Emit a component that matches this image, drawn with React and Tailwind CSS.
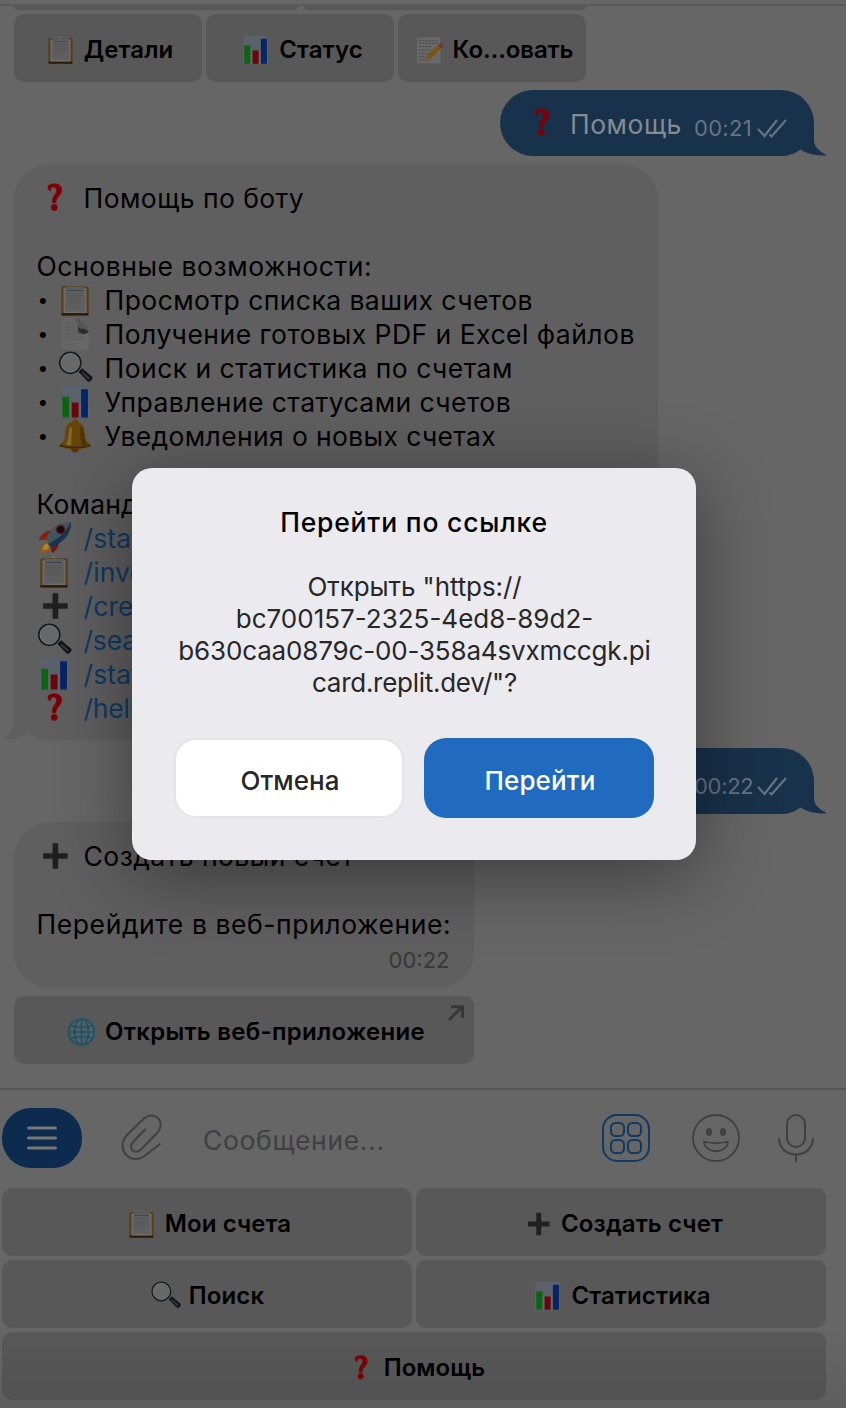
import React from "react";

const emojiArt = {
  clipboard: (
    <>
      <path d="M13 4.500 16 1.500 19 4.500" fill="none" stroke="#5f7280" strokeWidth="1.2" />
      <rect x="1.5" y="3.5" width="29" height="31" rx="2" fill="#5a3d14" />
      <rect x="1.5" y="31.8" width="29" height="2.7" rx="1.2" fill="#2f1c05" />
      <rect x="3.8" y="5.5" width="24.4" height="26.3" fill="#6c6c6c" />
      <rect x="5.5" y="9" width="21" height="21" fill="#5f5f5f" />
      <path d="M8 11h16M8 13.5h16M8 16h16M8 18.5h16M8 21h12" stroke="#565656" strokeWidth="1" />
      <path d="M5.5 4h21l-1.5 4h-18z" fill="#585e63" />
      <path d="M7 8h18" stroke="#393d40" strokeWidth="1" />
    </>
  ),
  chart: (
    <>
      <rect x="1.5" y="1" width="29" height="34" fill="#59626a" />
      <rect x="1.5" y="18" width="29" height="17" fill="#60666a" />
      <rect x="2.5" y="12.5" width="7.3" height="22" fill="#0c6413" />
      <rect x="12.5" y="18.5" width="7.3" height="16" fill="#6b060c" />
      <rect x="22.5" y="4.5" width="7.2" height="30" fill="#062566" />
    </>
  ),
  question: (
    <g transform="translate(.8 0)" fill="#7c0006" stroke="#7c0006" strokeWidth=".6">
      <path d="M8.800 5.300C14 1.300 23.300 2 23.300 9.800c0 6.200-5.900 6.400-6 13.200h-3.700c-.6-8.200 4.300-8.200 4.300-13 0-3-2.200-3.900-4.300-3.500-1.600.3-2.300 1.600-2 3.500-2.200.3-2.800-.8-2.800-4.700z" />
      <circle cx="15.5" cy="28" r="3.3" />
    </g>
  ),
  plus: <path d="M14.500 4.500h6V15h10v6h-10v10.500h-6V21h-10v-6h10z" fill="#202020" />,
  search: (
    <>
      <path d="m20.5 22 3-3 10 8.5c1.5 1.5-1.8 5.5-3.8 4z" fill="#15191b" stroke="#101314" strokeWidth="1.2" />
      <path d="m23.5 22.8 7.5 6.7" stroke="#3b4042" strokeWidth="1.5" />
      <circle cx="11" cy="12.5" r="11" fill="#686868" stroke="#171b1e" strokeWidth="2" />
      <circle cx="11" cy="12.5" r="9.8" fill="none" stroke="#777b7e" strokeWidth=".9" />
    </>
  ),
  page: (
    <>
      <path d="M1.5 1H18c2 3 0 9 3 11 3 1 7 0 9.5 5v18h-29z" fill="#666" />
      <path d="M5 6h10M5 8.5h10M5 11h11M5 13.5h12M5 16h16M5 18.5h20M5 21h20M5 23.5h20M5 29h9" stroke="#5c5c5c" />
      <path d="M15 1c6 .5 14 6 15.500 14-3-2-7 1-11-1 1-4 0-11-4.500-13" fill="#555" />
      <path d="M15 1c4 3 3 9 6 11 3 1 7 0 9.500 4-3 3-8 2-11 0 0-5-1-11-4.500-15" fill="#2d2d2d" />
    </>
  ),
  bell: (
    <>
      <circle cx="16" cy="31.5" r="4" fill="#543704" />
      <path d="M13 3c0-4 6-4 6 0 6 1.5 7 7 7.5 14 .3 6 2.5 8 6 10v2q-16.500 6-33 0v-2c3.5-2 5.700-4 6-10C6 10 7 4.500 13 3" fill="#664509" />
      <path d="M10 9c-1 8-.5 13-4 18l6 1c0-5 .5-13 1-19z" fill="#87662a" />
      <path d="M21 7c1 8 0 14 3 21l5-1c-4-5-3-14-5-18z" fill="#4f3405" />
      <path d="M0 28q16 5 32 0" fill="none" stroke="#3e2602" strokeWidth="1.7" />
    </>
  ),
  rocket: (
    <>
      <path d="M13 10C8 10 3 13-.5 20l8-.5z" fill="#84200f" />
      <path d="m21 20-9 7 2 7c5-3 8-8 7-14" fill="#7a1510" />
      <path d="M2 34c-1-7 2-11 7-12l4 5c-1 5-5 7-11 7" fill="#94581b" />
      <path d="M4 31c0-4 2-7 5-7l2 3c-1 3-3 4-7 4" fill="#a18a32" />
      <path d="M7 20C11 9 20 1 34 1c1 11-8 22-21 27z" fill="#46535e" />
      <path d="M34 1c1 11-8 22-21 27l-3-4C20 20 29 11 34 1" fill="#18344e" />
      <circle cx="23" cy="9" r="4.2" fill="#120d10" stroke="#681318" strokeWidth="1.5" />
    </>
  ),
  memo: (
    <>
      <path d="M1 3h28v31H1z" fill="#696969" />
      <path d="M3 7h23M3 10h23M3 14h15M3 18h14M3 22h12M3 26h8M3 30h6" stroke="#4d4d4d" strokeDasharray="3 1" strokeWidth="1.2" />
      <path d="m9 33 3-8L26 12l4 4-14 14z" fill="#76571a" />
      <path d="m9 33 3-8 4 5z" fill="#635f51" />
      <path d="m26 12 3-2c3-.5 5 3 2.500 5L30 16z" fill="#6b373a" />
    </>
  ),
  globe: (
    <g fill="none" stroke="#1d5166" strokeWidth="1.8">
      <circle cx="16" cy="18" r="15.5" fill="#515f65" />
      <ellipse cx="16" cy="18" rx="8.5" ry="15.5" />
      <path d="M16 2.500v31M.5 18h31M3 10.500q13 4 26 0M3 25.500q13-4 26 0" />
    </g>
  ),
};

function Emoji({ name, small }) {
  return (
    <svg viewBox="0 0 32 36" className={small ? "h-[30px] w-[27px] shrink-0 overflow-visible" : "h-[34px] w-[32px] shrink-0 overflow-visible"}>
      {emojiArt[name]}
    </svg>
  );
}

function Key({ icon, label, className = "", pad = "pl-[4px]", text = "tracking-[0.1px]", children }) {
  return (
    <button className={`relative flex h-[68px] items-center justify-center gap-[10px] rounded-[10px] bg-[#585858] pt-[3px] text-[24px] font-semibold text-black ${pad} ${className}`}>
      <Emoji name={icon} small />
      <span className={`whitespace-nowrap ${text}`}>{label}</span>
      {children}
    </button>
  );
}

function Checks() {
  return (
    <svg viewBox="0 0 30 20" className="h-[20px] w-[30px]" fill="none" stroke="currentColor" strokeWidth="2.2">
      <path d="m1 10 6.500 7L20 1M12.500 15.500l2 2L29 1" />
    </svg>
  );
}

function Outgoing({ icon, label, time, timeText }) {
  return (
    <div className="relative mr-8 flex h-[66px] w-[314px] items-center self-end rounded-[33px] bg-[#18324b] pl-[25px]">
      <span className="flex w-[32px]">{icon && <Emoji name={icon} />}</span>
      <span className="ml-[13px] w-[112px] whitespace-nowrap pt-[4px] text-[26.5px] tracking-[0.5px] text-[#848b91]">{label}</span>
      <span className={`ml-[12px] mt-[11px] w-[60px] text-[22px] text-[#667582] ${timeText}`}>{time}</span>
      <span className="ml-[3px] mt-[11px] text-[#667582]"><Checks /></span>
      <svg viewBox="0 0 46 34" className="absolute -right-[12px] bottom-0 h-[34px] w-[46px]">
        <path d="M0 34C8 34 14 31 20 27c7 5 15 6.500 26 6.500v-1C39 29 34 25 34 18V0H10z" fill="#18324b" />
      </svg>
    </div>
  );
}

function Row({ icon, bullet, children, link, text = "tracking-[0.44px]" }) {
  return (
    <div className={`flex h-[34px] items-center whitespace-nowrap ${link ? "text-[#103963]" : ""}`}>
      {bullet && <span className="w-[21px] pl-[1px] pt-[2px] text-[19px]">•</span>}
      {icon && <span className="ml-[1.5px] mr-[13.5px] flex"><Emoji name={icon} /></span>}
      <span className={`leading-[34px] ${text}`}>{children}</span>
    </div>
  );
}

function Chat() {
  return (
    <main className="relative flex h-[1082px] flex-col overflow-hidden">
      <div className="flex h-1 gap-[6px] pl-[14px]">
        <div className="h-1 w-[284px] rounded-b-[10px] bg-[#585858]" />
        <div className="h-1 w-[282px] rounded-b-[10px] bg-[#585858]" />
      </div>
      <div className="mt-1 flex gap-1 pl-[14px]">
        <Key icon="clipboard" label="Детали" className="w-[188px]" />
        <Key icon="chart" label="Статус" className="w-[188px]" pad="pl-[5px]" text="tracking-[0.1px]" />
        <Key icon="memo" label="Ко…овать" className="w-[188px]" pad="pl-[5px]" text="tracking-[-0.1px]" />
      </div>
      <div className="mt-2 flex flex-col"><Outgoing icon="question" label="Помощь" time="00:21" timeText="tracking-[0.3px]" /></div>
      <section className="relative ml-[14px] mt-2 h-[576px] w-[644px] rounded-[36px] bg-[#5f5f5f] pl-[22.5px] pt-[17px] text-[26.5px] text-black">
        <Row icon="question">Помощь по боту</Row>
        <Row />
        <Row text="tracking-[0.56px]">Основные возможности:</Row>
        <Row bullet icon="clipboard">Просмотр списка ваших счетов</Row>
        <Row bullet icon="page" text="tracking-[0.48px]">Получение готовых PDF и Excel файлов</Row>
        <Row bullet icon="search" text="tracking-[0.47px]">Поиск и статистика по счетам</Row>
        <Row bullet icon="chart">Управление статусами счетов</Row>
        <Row bullet icon="bell" text="tracking-[0.36px]">Уведомления о новых счетах</Row>
        <Row />
        <Row text="tracking-[0.2px]">Команды:</Row>
        <Row link icon="rocket" text="tracking-[0.1px]">/start</Row>
        <Row link icon="clipboard" text="tracking-[0.1px]">/invoices</Row>
        <Row link icon="plus" text="tracking-[0.1px]">/create</Row>
        <Row link icon="search" text="tracking-[-0.2px]">/search</Row>
        <Row link icon="chart" text="tracking-[0.1px]">/stats</Row>
        <Row link icon="question" text="tracking-[-0.2px]">/help</Row>
        <svg viewBox="0 0 46 34" className="absolute -left-[12px] bottom-0 h-[34px] w-[46px] -scale-x-100">
          <path d="M0 34C8 34 14 31 20 27c7 5 15 6.500 26 6.500v-1C39 29 34 25 34 18V0H10z" fill="#5f5f5f" />
        </svg>
      </section>
      <div className="mt-2 flex flex-col"><Outgoing time="00:22" timeText="tracking-[-0.3px]" /></div>
      <section className="ml-[14px] mt-2 h-[166px] w-[460px] rounded-[36px] bg-[#5f5f5f] pl-[22.5px] pt-[17px] text-[26.5px] text-black">
        <Row icon="plus">Создать новый счет</Row>
        <Row />
        <Row text="tracking-[0.58px]">Перейдите в веб-приложение:</Row>
        <div className="mr-[24.5px] mt-[2px] text-right text-[22px] leading-[34px] text-[#373737]">00:22</div>
      </section>
      <Key icon="globe" label="Открыть веб-приложение" className="ml-[14px] mt-2 w-[460px]" pad="pl-[5px]" text="tracking-[0.27px]">
        <svg viewBox="0 0 16 16" className="absolute right-[10px] top-[9px] size-4" fill="none" stroke="#373737" strokeWidth="3">
          <path d="M1 15 13.500 2.500M3 1.800h11.500V13" />
        </svg>
      </Key>
    </main>
  );
}

function Composer() {
  return (
    <div className="flex h-[98px] shrink-0 items-center border-t-2 border-[#575757] pl-[2px] text-[#404040]">
      <button className="flex h-[60px] w-[80px] items-center justify-center rounded-[29px] bg-[#0d2b4e]">
        <svg viewBox="0 0 30 24" className="h-6 w-[30px]" stroke="#777" strokeWidth="3" strokeLinecap="round"><path d="M1.500 2h27M1.500 12h27M1.500 22h27" /></svg>
      </button>
      <svg viewBox="0 0 42 48" className="ml-[39px] h-12 w-[42px]" fill="none" stroke="currentColor" strokeWidth="2" strokeLinecap="round">
        <path d="M24 15.500 12.500 27.500c-6 7 .8 13.500 7 8.500L36.500 18.500C45.500 8 34-4 23.500 4L5.500 21.500C-6 35.500 10 53 25 41L39 30" />
      </svg>
      <span className="ml-[40px] w-[399px] pt-[6px] text-[26.5px] tracking-[0.65px]">Сообщение...</span>
      <svg viewBox="0 0 48 48" className="size-12" fill="none" stroke="#103963" strokeWidth="2">
        <rect x="1" y="1" width="46" height="46" rx="14" />
        <rect x="9" y="9" width="13" height="13" rx="4.5" /><rect x="26" y="9" width="13" height="13" rx="4.5" /><rect x="9" y="26" width="13" height="13" rx="4.5" /><rect x="26" y="26" width="13" height="13" rx="4.5" />
      </svg>
      <svg viewBox="0 0 48 48" className="ml-[42px] size-12" fill="none" stroke="currentColor" strokeWidth="1.8">
        <circle cx="24" cy="24" r="23" />
        <ellipse cx="17" cy="18" rx="3" ry="4" fill="currentColor" stroke="none" />
        <ellipse cx="31" cy="18" rx="3" ry="4" fill="currentColor" stroke="none" />
        <path d="M12 27.500q12 3.500 24 0c-1 13-23 13-24 0z" strokeLinejoin="round" />
      </svg>
      <svg viewBox="0 0 36 50" className="ml-[38px] h-[50px] w-9" fill="none" stroke="currentColor" strokeWidth="2">
        <rect x="9" y="2" width="18" height="32" rx="9" /><path d="M1 25c0 22 34 22 34 0M18 41v8" />
      </svg>
    </div>
  );
}

function Dialog() {
  return (
    <div className="absolute left-[132px] top-[468px] flex h-[392px] w-[564px] flex-col rounded-[20px] bg-[#ebeaef] px-[42px] pt-[36px] text-center shadow-[0_14px_76px_rgba(0,0,0,0.42)]">
      <h1 className="text-[26.5px] font-medium leading-[36px] tracking-[0.8px] text-black">Перейти по ссылке</h1>
      <p className="mt-[31px] whitespace-nowrap pl-[1px] text-[26px] leading-8 text-[#272727]">
        <span className="tracking-[-0.1px]">Открыть "https://</span><br />
        <span>bc700157-2325-4ed8-89d2-</span><br />
        <span className="tracking-[-0.16px]">b630caa0879c-00-358a4svxmccgk.pi</span><br />
        <span className="tracking-[-0.28px]">card.replit.dev/"?</span>
      </p>
      <div className="mt-[39px] flex gap-5 text-[26px] font-medium">
        <button className="h-20 w-[230px] rounded-[22px] border-2 border-[#e4e4e7] bg-white pl-[2px] pt-1 text-[#272727]">Отмена</button>
        <button className="h-20 w-[230px] rounded-[22px] bg-[#206bc0] pl-[2px] pt-1 tracking-[0.1px] text-white">Перейти</button>
      </div>
    </div>
  );
}

export default function App() {
  return (
    <div className="relative flex h-[1408px] w-[846px] flex-col overflow-hidden bg-[#666] pt-1 font-['Inter','Liberation_Sans',sans-serif]">
      <div className="h-[2px] shrink-0 bg-[#595959]" />
      <Chat />
      <Composer />
      <div className="grid grid-cols-2 gap-1 pl-[2px] pr-5 pt-[2px]">
        <Key icon="clipboard" label="Мои счета" pad="pl-[5px]" />
        <Key icon="plus" label="Создать счет" pad="pl-[5px]" />
        <Key icon="search" label="Поиск" pad="pl-[2px]" />
        <Key icon="chart" label="Статистика" pad="pl-[3px]" />
        <Key icon="question" label="Помощь" className="col-span-2" />
      </div>
      <div className="absolute inset-x-0 bottom-0 h-[80px] bg-linear-to-b from-black/0 to-black/8" />
      <Dialog />
    </div>
  );
}
